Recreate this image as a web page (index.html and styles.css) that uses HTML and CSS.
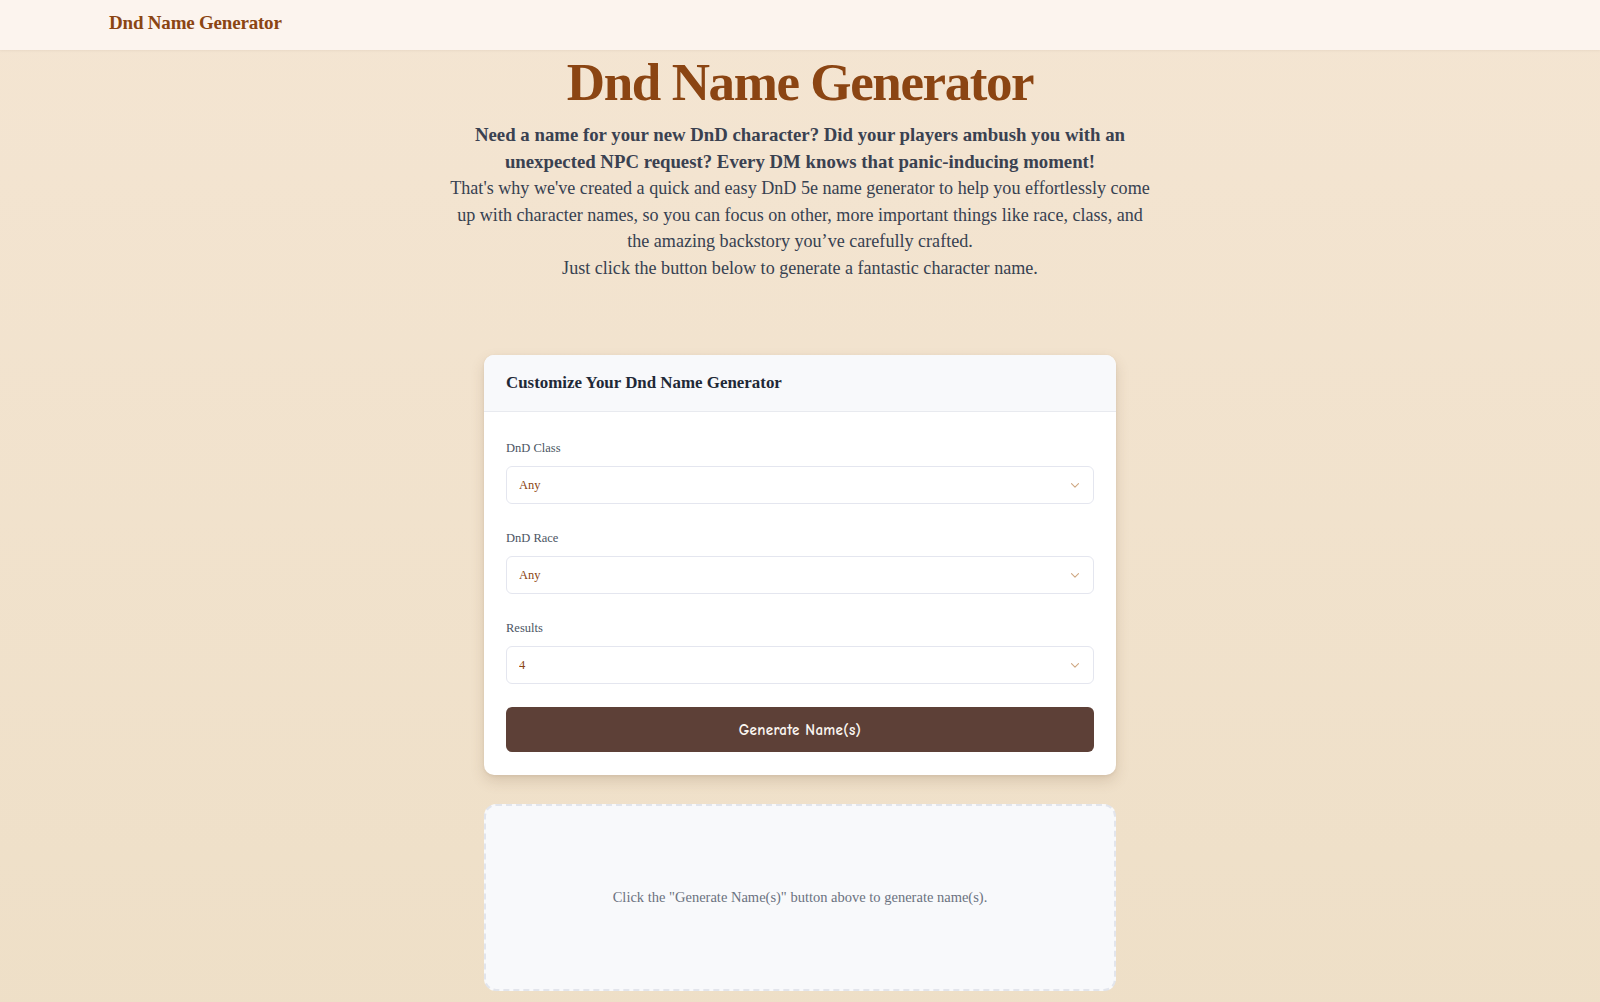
FILE: index.html
```html
<!DOCTYPE html>
<html lang="en">
<head>
<meta charset="utf-8">
<title>Dnd Name Generator</title>
<link rel="stylesheet" href="styles.css">
</head>
<body>
  <header class="topbar">
    <div class="topbar-inner">
      <a class="brand" href="#">Dnd Name Generator</a>
    </div>
  </header>

  <main class="page">
    <section class="intro">
      <h1 class="title">Dnd Name Generator</h1>
      <p class="lead">
        <strong>Need a name for your new DnD character? Did your players ambush you with an unexpected NPC request? Every DM knows that panic-inducing moment!</strong><br>
        That's why we've created a quick and easy DnD 5e name generator to help you effortlessly come up with character names, so you can focus on other, more important things like race, class, and the amazing backstory you’ve carefully crafted.<br>
        Just click the button below to generate a fantastic character name.
      </p>
    </section>

    <section class="card">
      <div class="card-head">
        <h2 class="card-title">Customize Your Dnd Name Generator</h2>
      </div>
      <form class="card-body">
        <div class="field">
          <label class="field-label" for="cls">DnD Class</label>
          <div class="select">
            <select id="cls"><option>Any</option></select>
            <svg class="chev" viewBox="0 0 20 20" width="14" height="14"><path d="M5 8l5 5 5-5" fill="none" stroke="currentColor" stroke-width="1.6" stroke-linecap="round" stroke-linejoin="round"/></svg>
          </div>
        </div>
        <div class="field">
          <label class="field-label" for="race">DnD Race</label>
          <div class="select">
            <select id="race"><option>Any</option></select>
            <svg class="chev" viewBox="0 0 20 20" width="14" height="14"><path d="M5 8l5 5 5-5" fill="none" stroke="currentColor" stroke-width="1.6" stroke-linecap="round" stroke-linejoin="round"/></svg>
          </div>
        </div>
        <div class="field">
          <label class="field-label" for="num">Results</label>
          <div class="select">
            <select id="num"><option>4</option></select>
            <svg class="chev" viewBox="0 0 20 20" width="14" height="14"><path d="M5 8l5 5 5-5" fill="none" stroke="currentColor" stroke-width="1.6" stroke-linecap="round" stroke-linejoin="round"/></svg>
          </div>
        </div>
        <button class="btn" type="button">Generate Name(s)</button>
      </form>
    </section>

    <section class="results">
      <p class="results-empty">Click the "Generate Name(s)" button above to generate name(s).</p>
    </section>
  </main>
</body>
</html>
```

FILE: styles.css
```css
* { box-sizing: border-box; }

html, body {
  margin: 0;
  padding: 0;
}

body {
  font-family: "Liberation Serif", "DejaVu Serif", serif;
  background: linear-gradient(180deg, #f4e5d2 0%, #eedfc7 100%);
  min-height: 100vh;
  color: #374151;
}

/* top navigation bar */
.topbar {
  background: #fcf4ee;
  height: 50px;
  box-shadow: 0 1px 2px rgba(120, 90, 60, 0.08);
}

.topbar-inner {
  padding: 0 0 4px 109px;
  height: 100%;
  display: flex;
  align-items: center;
}

.brand {
  font-size: 19px;
  font-weight: 700;
  color: #8b4513;
  text-decoration: none;
  letter-spacing: -0.2px;
}

/* page content */
.page {
  display: flex;
  flex-direction: column;
  align-items: center;
  padding-bottom: 40px;
}

.intro {
  width: 712px;
  text-align: center;
}

.title {
  margin: 2px 0 10px;
  font-size: 53px;
  line-height: 60px;
  font-weight: 700;
  color: #8b4513;
  letter-spacing: -1.4px;
}

.lead {
  margin: 0;
  font-size: 18.1px;
  line-height: 26.5px;
  color: #374151;
}

.lead strong {
  font-size: 18.8px;
  color: #3a4150;
}

/* settings card */
.card {
  margin-top: 74px;
  width: 632px;
  background: #ffffff;
  border-radius: 10px;
  box-shadow: 0 6px 14px rgba(110, 80, 50, 0.18), 0 1px 3px rgba(110, 80, 50, 0.1);
  overflow: hidden;
}

.card-head {
  background: #f8f9fb;
  border-bottom: 1px solid #e8eaef;
  height: 57px;
  padding: 0 22px;
  display: flex;
  align-items: center;
}

.card-title {
  margin: 0;
  font-size: 16.9px;
  font-weight: 700;
  color: #1f2937;
}

.card-body {
  padding: 28px 22px 23px;
  display: flex;
  flex-direction: column;
}

.field {
  display: flex;
  flex-direction: column;
  margin-bottom: 26px;
}

.field:last-of-type {
  margin-bottom: 23px;
}

.field-label {
  font-size: 12.5px;
  color: #4b5563;
  margin-bottom: 10px;
  line-height: 16px;
}

.select {
  position: relative;
  height: 38px;
}

.select select {
  appearance: none;
  -webkit-appearance: none;
  width: 100%;
  height: 100%;
  border: 1px solid #e4e6ef;
  border-radius: 6px;
  background: #ffffff;
  padding: 0 12px;
  font-family: inherit;
  font-size: 12.5px;
  color: #8b4513;
  outline: none;
}

.chev {
  position: absolute;
  right: 12px;
  top: 50%;
  transform: translateY(-50%);
  color: #cfa883;
  pointer-events: none;
}

.btn {
  height: 45px;
  border: 0;
  border-radius: 6px;
  background: #5d4037;
  color: #fbf6f1;
  font-family: "Comic Neue", "DejaVu Sans", sans-serif;
  font-size: 15px;
  font-weight: 600;
  letter-spacing: 0.3px;
  cursor: pointer;
}

/* results area */
.results {
  margin-top: 29px;
  width: 632px;
  height: 187px;
  background: #f8f9fb;
  border: 2px dashed #e2e5ec;
  border-radius: 12px;
  display: flex;
  align-items: center;
  justify-content: center;
}

.results-empty {
  margin: 0;
  font-size: 14.5px;
  color: #6b7280;
}
```
